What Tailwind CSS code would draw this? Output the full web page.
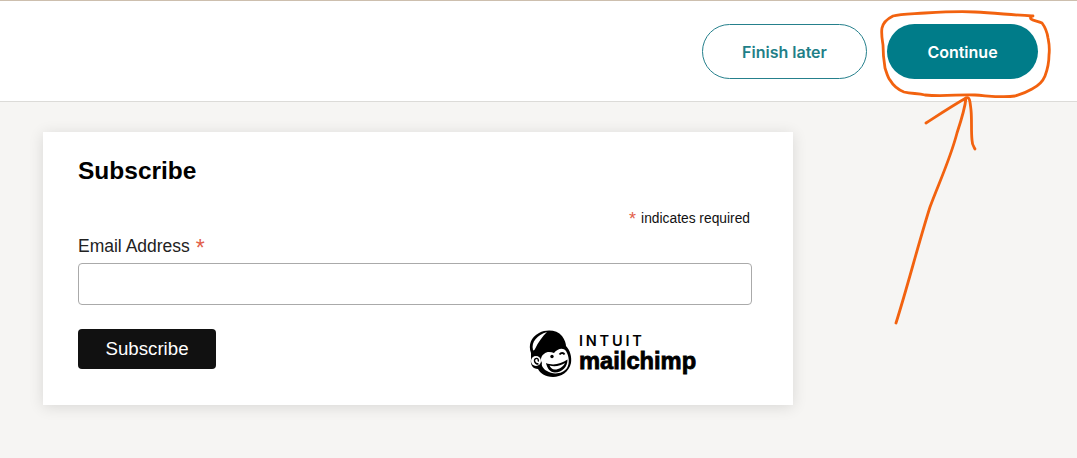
<!DOCTYPE html>
<html>
<head>
<meta charset="utf-8">
<script src="https://cdn.jsdelivr.net/npm/@tailwindcss/browser@4"></script>
</head>
<body class="bg-[#f6f5f3] overflow-hidden">
<div class="relative w-[1077px] h-[458px] overflow-hidden font-['Liberation_Sans',sans-serif]">
  <header class="h-[102px] bg-white border-t border-t-[#cdbfae] border-b border-b-[#dcdbd8] flex items-start justify-end gap-5 pt-[23px] pr-[39px] font-['Inter',sans-serif]">
    <button class="w-[165px] h-[55px] pt-[1px] rounded-full border border-[#25808c] bg-white text-[#1f7f88] text-[16px] font-semibold">Finish later</button>
    <button class="w-[151px] h-[55px] pt-[1px] rounded-full bg-[#007c89] text-white text-[16px] font-semibold">Continue</button>
  </header>
  <main class="pt-[30px] pl-[43px]">
    <section class="w-[750px] h-[273px] bg-white shadow-[0_2px_14px_rgba(0,0,0,0.12)] pl-[35px] pr-[41px] pt-[24px]">
      <h2 class="text-[24.5px] leading-[30px] font-bold text-black">Subscribe</h2>
      <p class="mt-[24px] h-[18px] text-right text-[13.8px] leading-[18px] text-[#111] pr-[2px]"><span class="text-[#e2604a] text-[18px] leading-[18px] align-[-2px] mr-[5px]">*</span>indicates required</p>
      <label class="block mt-[8px] text-[17.5px] leading-[20px] text-[#222]">Email Address <span class="text-[#e2604a] text-[23px] leading-[20px] ml-[1px] align-[-4px]">*</span></label>
      <div class="mt-[5px] h-[42px] rounded-[4px] border border-[#aaa] bg-white"></div>
      <div class="mt-[24px] flex items-start">
        <button class="w-[138px] h-[40px] rounded-[4px] bg-[#111] text-white text-[18.7px]">Subscribe</button>
        <div class="ml-[309px] -mt-[2px] flex items-start gap-[4px]">
          <svg class="w-[50px] h-[52px]" viewBox="0 0 50 52">
            <path d="M6 26C3 18 6 10 14 6 22 2 32 3 37 9 40 13 41 17 41 19 45 23 47 30 46 36 44 45 36 50 28 50 20 50 15 46 13 42 8 42 5 38 6 32Z" fill="#000"/>
            <path d="M8 23C6 15 12 8 22 5 18 9 13 15 10 22 9.500 23 8.500 24 8 23Z" fill="#fff"/>
            <path d="M19 27C22 24 26 25 29 26 32 22 38 20 41 24 44 29 45 36 42 41 38 47 28 48 22 44 18 42 16 38 17 36 15 33 16 29 19 27Z" fill="#fff"/>
            <circle cx="11" cy="34" r="5" fill="#fff"/>
            <path d="M13.500 37C9 37 8.500 32 11 31.500 13 31 14 33 13 34.500" fill="none" stroke="#000" stroke-width="1.400"/>
            <circle cx="27" cy="29.500" r="1.700" fill="#000"/>
            <path d="M34.500 27.500C36 25.500 38.500 25.500 39.500 27.500" fill="none" stroke="#000" stroke-width="1.800"/>
            <path d="M21 36C28 39 36 37 42.500 32.500 42.500 40 37 45.500 30 45.500 25 45.500 22 41 21 36Z" fill="#000"/>
            <path d="M24.500 38.500C30 40.500 36 38.500 40 36 38 40 34 42.500 30 42.500 27 42.500 25.500 40.500 24.500 38.500Z" fill="#fff"/>
          </svg>
          <div class="flex flex-col mt-[7px] text-black">
            <span class="text-[14.5px] leading-[14px] tracking-[2.8px] font-['Inter',sans-serif] font-semibold">INTUIT</span>
            <span class="text-[23.7px] leading-[27px] font-['Liberation_Sans',sans-serif] font-bold [-webkit-text-stroke:0.8px_#000]">mailchimp</span>
          </div>
        </div>
      </div>
    </section>
  </main>
  <svg class="absolute left-0 top-0 pointer-events-none" width="1077" height="458" viewBox="0 0 1077 458" fill="none" stroke="#f2620f" stroke-width="2.800" stroke-linecap="round" stroke-linejoin="round">
    <path d="M1032 16C1012 15 995 13 975 12 960 11 942 12 925 13 910 14 900 14 893 16 887 19 883 23 882 28 881 33 882 38 883 45 883 55 884 62 885 68 887 74 888 78 890 80 894 87 899 90 904 92 912 94 918 93 925 95 945 97 960 94 975 95 990 96 1003 98 1015 96 1022 94 1027 92 1032 89 1040 85 1043 81 1045 76 1048 68 1049 62 1049 55 1050 47 1049 43 1048 38 1047 31 1045 27 1042 23 1038 21 1033 21 1031 19 1030 18 1031 16 1033 16"/>
    <path d="M896 323C908 285 918 245 930 207 938 185 950 160 957 133 962 118 965 108 966 98 952 106 940 114 926 123"/>
    <path d="M966 98C970 96 970 102 971 110 972 120 971 130 972 140 972 145 974 147 975 149"/>
  </svg>
</div>
</body>
</html>
